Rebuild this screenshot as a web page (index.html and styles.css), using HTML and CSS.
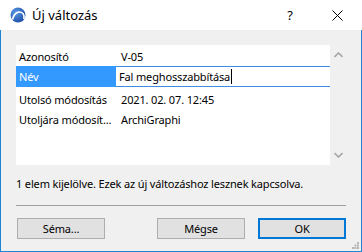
FILE: index.html
```html
<!DOCTYPE html>
<html lang="hu">
<head>
  <meta charset="UTF-8" />
  <title>Új változás</title>
  <link rel="stylesheet" href="styles.css">
</head>
<body>
  <div class="window">
    <div class="titlebar">
      <svg class="app-icon" width="16" height="16" viewBox="0 0 16 16">
        <defs>
          <radialGradient id="g" cx="35%" cy="35%" r="70%">
            <stop offset="0" stop-color="#5b9be6" />
            <stop offset="1" stop-color="#1d4fa8" />
          </radialGradient>
        </defs>
        <circle cx="8" cy="8" r="7.5" fill="url(#g)" />
        <path d="M2.5 12.5 C4 6 9 3 13 6.5 C14.2 8 14.3 10 13.8 12" fill="none" stroke="#fff" stroke-width="1.6" />
      </svg>
      <span class="title">Új változás</span>
      <span class="help">?</span>
      <span class="close">
        <svg width="11" height="11" viewBox="0 0 11 11"><path d="M0.5 0.5 L10.5 10.5 M10.5 0.5 L0.5 10.5" stroke="#000" stroke-width="1" /></svg>
      </span>
    </div>

    <div class="content">
      <div class="listarea">
        <div class="list">
          <div class="row">
            <div class="label">Azonosító</div>
            <div class="value">V-05</div>
          </div>
          <div class="row row-edit">
            <div class="label selected">Név</div>
            <div class="value editor">Fal meghosszabbítása<span class="caret"></span></div>
          </div>
          <div class="row">
            <div class="label">Utolsó módosítás</div>
            <div class="value">2021. 02. 07. 12:45</div>
          </div>
          <div class="row">
            <div class="label">Utoljára módosít...</div>
            <div class="value">ArchiGraphi</div>
          </div>
        </div>
        <div class="scrollbar">
          <svg width="9" height="6" viewBox="0 0 9 6"><path d="M0.5 5 L4.5 1 L8.5 5" fill="none" stroke="#a6a6a6" stroke-width="1.6" /></svg>
          <svg width="9" height="6" viewBox="0 0 9 6"><path d="M0.5 1 L4.5 5 L8.5 1" fill="none" stroke="#a6a6a6" stroke-width="1.6" /></svg>
        </div>
      </div>

      <p class="info">1 elem kijelölve. Ezek az új változáshoz lesznek kapcsolva.</p>

      <div class="separator"></div>

      <div class="buttons">
        <button class="btn">Séma...</button>
        <div class="spacer"></div>
        <button class="btn">Mégse</button>
        <button class="btn btn-default">OK</button>
      </div>

      <svg class="grip" width="7" height="7" viewBox="0 0 7 7">
        <rect x="5" y="0" width="2" height="2" fill="#b5b5b5" />
        <rect x="2.5" y="2.5" width="2" height="2" fill="#b5b5b5" />
        <rect x="5" y="2.5" width="2" height="2" fill="#b5b5b5" />
        <rect x="0" y="5" width="2" height="2" fill="#b5b5b5" />
        <rect x="2.5" y="5" width="2" height="2" fill="#b5b5b5" />
        <rect x="5" y="5" width="2" height="2" fill="#b5b5b5" />
      </svg>
    </div>
  </div>
</body>
</html>
```

FILE: styles.css
```css
* {
  box-sizing: border-box;
}

body {
  margin: 0;
  font-family: "Noto Sans", "DejaVu Sans", sans-serif;
  font-size: 11px;
  letter-spacing: -0.15px;
  color: #000;
  background: #fff;
}

.window {
  width: 362px;
  height: 252px;
  display: flex;
  flex-direction: column;
}

.titlebar {
  height: 30px;
  background: #fff;
  display: flex;
  align-items: center;
  padding-left: 10px;
  letter-spacing: 0;
}

.app-icon {
  flex: none;
}

.title {
  margin-left: 6px;
  font-size: 13px;
  flex: 1;
}

.help {
  font-size: 13px;
  margin-right: 39px;
}

.close {
  width: 11px;
  height: 11px;
  margin-right: 19px;
  display: flex;
}

.content {
  position: relative;
  flex: 1;
  background: #f0f0f0;
  border: 1px solid #1e84d6;
  border-top: none;
  padding: 15px 15px 0 15px;
  display: flex;
  flex-direction: column;
}

.listarea {
  display: flex;
  height: 120px;
}

.list {
  flex: 1;
  background: #fff;
  padding-top: 1px;
}

.row {
  display: flex;
  height: 20px;
  align-items: center;
}

.row-edit {
  height: 21px;
  align-items: stretch;
}

.label {
  width: 100px;
  padding-left: 3px;
  white-space: nowrap;
  overflow: hidden;
}

.selected {
  background: #3399ff;
  color: #fff;
  display: flex;
  align-items: center;
}

.value {
  flex: 1;
  padding-left: 5px;
  white-space: nowrap;
}

.editor {
  border-top: 1px solid #3d8ee0;
  border-bottom: 1px solid #3d8ee0;
  padding-left: 3px;
  display: flex;
  align-items: center;
}

.caret {
  display: inline-block;
  width: 1px;
  height: 15px;
  background: #000;
  margin-left: 1px;
}

.row-edit + .row {
  height: 22px;
  padding-top: 2px;
}

.scrollbar {
  width: 16px;
  display: flex;
  flex-direction: column;
  justify-content: space-between;
  align-items: center;
  padding: 7px 0 7px 0;
}

.info {
  margin: 11px 0 0 0;
  line-height: 16px;
}

.separator {
  height: 1px;
  background: #a0a0a0;
  margin-top: 13px;
}

.buttons {
  display: flex;
  margin-top: 12px;
  padding-left: 1px;
}

.spacer {
  flex: 1;
}

.btn {
  width: 88px;
  height: 21px;
  background: #e1e1e1;
  border: 1px solid #adadad;
  font-family: inherit;
  font-size: 11px;
  letter-spacing: -0.15px;
  color: #000;
  padding: 0;
}

.btn + .btn {
  margin-left: 13px;
}

.btn-default {
  border: 2px solid #0078d7;
}

.grip {
  position: absolute;
  right: 2px;
  bottom: 2px;
}
```
